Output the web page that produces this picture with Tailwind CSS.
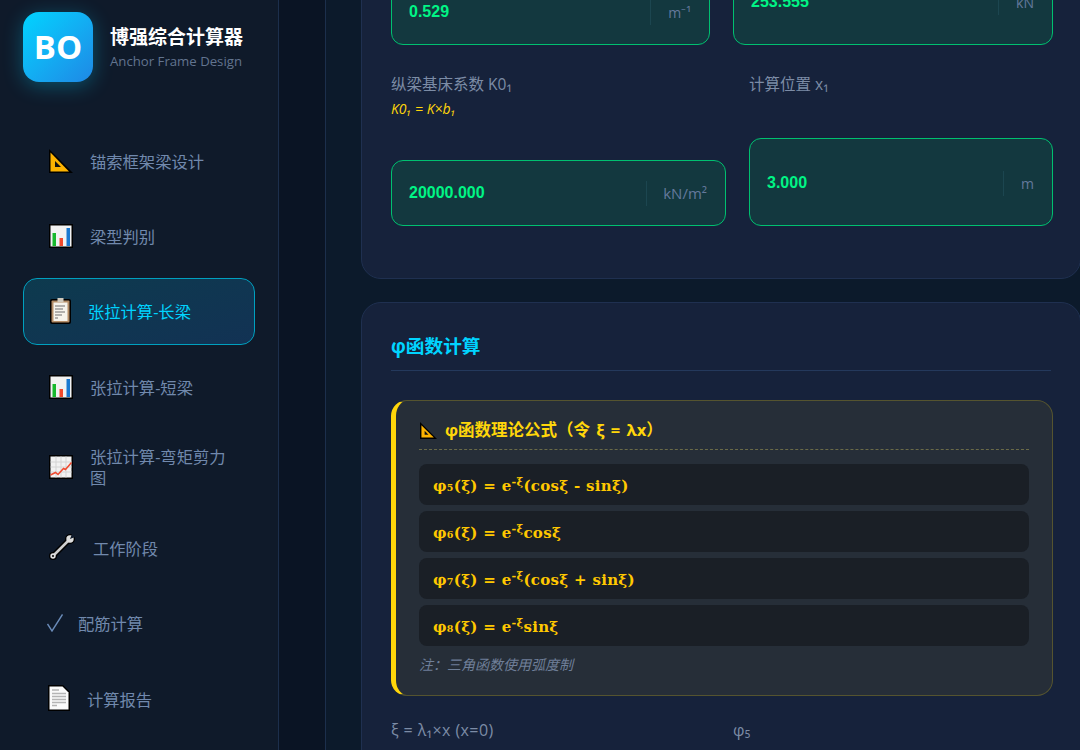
<!DOCTYPE html>
<html lang="zh-CN">
<head>
  <meta charset="UTF-8" />
  <title>博强综合计算器</title>
  <script src="https://cdn.jsdelivr.net/npm/@tailwindcss/browser@4"></script>
</head>
<body class="bg-[#0a1424] h-[750px] overflow-hidden font-['Open_Sans','Noto_Sans_CJK_SC',sans-serif]">
  <div class="flex h-[750px] overflow-hidden">

    <!-- Sidebar -->
    <aside class="w-[279px] shrink-0 h-full bg-[#0f1a2a] border-r border-[#1c2f4c] overflow-hidden">
      <div class="flex items-center gap-[17px] pl-[23px] pt-[12px]">
        <div class="w-[70px] h-[70px] rounded-2xl bg-gradient-to-br from-[#00d4ff] to-[#1e88e5] shadow-[0_4px_20px_rgba(0,212,255,0.3)] flex items-center justify-center text-white text-[33px] font-bold">BO</div>
        <div>
          <div class="text-white text-[19px] leading-[28px] font-bold">博强综合计算器</div>
          <div class="text-[#62748f] text-[13.2px] leading-[20px]">Anchor Frame Design</div>
        </div>
      </div>

      <nav class="mt-[45px] ml-[23px] w-[232px] flex flex-col gap-2 text-[16.3px] leading-[21px] text-[#7189ad]">
        <a class="flex items-center gap-4 px-[25px] py-[18px] h-[67.33px]">
          <svg class="w-[24px] h-[24px] mx-[1px] shrink-0" viewBox="0 0 24 24"><path d="M0 0v24h24z" fill="#000"/><path d="M1.500 3.500v19h18.500z" fill="#fdb300"/><path d="M6 12v6h6z" fill="#111"/></svg>
          <span class="pt-[4px]">锚索框架梁设计</span>
        </a>
        <a class="flex items-center gap-4 px-[25px] py-[18px] h-[67.33px]">
          <svg class="w-[24px] h-[24px] mx-[1px] shrink-0" viewBox="0 0 24 24"><rect width="24" height="24" fill="#000"/><rect x="1.500" y="1.500" width="21" height="21" fill="#f2f2f2"/><rect x="3.500" y="9" width="3.500" height="13" fill="#18b92d"/><rect x="10.500" y="14" width="3.500" height="8" fill="#f0492c"/><rect x="17.500" y="4" width="3.500" height="18" fill="#1a78d0"/></svg>
          <span class="pt-[4px]">梁型判别</span>
        </a>
        <a class="flex items-center gap-4 px-[24px] py-[18px] h-[67.33px] rounded-[14px] border border-[#00a0bf] bg-gradient-to-br from-[#0d3a4e] to-[#123254] text-[#00d4ff]">
          <svg class="w-[21px] h-[26px] ml-[2px] mr-[1px] shrink-0" viewBox="0 0 21 26"><rect y="1" width="21" height="25" rx="2" fill="#000"/><rect x="1.500" y="2.500" width="18" height="22" rx="1" fill="#b58e68"/><rect x="3.500" y="4.500" width="14" height="18.500" fill="#f6f3ec"/><rect x="7.500" y="0" width="6" height="4" fill="#cfc9bd"/><path d="M5 8h10M5 11h8M5 14h10M5 17h7M5 20h3" stroke="#6e6e6e" stroke-width="1.200"/></svg>
          <span class="pt-[2px]">张拉计算-长梁</span>
        </a>
        <a class="flex items-center gap-4 px-[25px] py-[18px] h-[67.33px]">
          <svg class="w-[24px] h-[24px] mx-[1px] shrink-0" viewBox="0 0 24 24"><rect width="24" height="24" fill="#000"/><rect x="1.500" y="1.500" width="21" height="21" fill="#f2f2f2"/><rect x="3.500" y="9" width="3.500" height="13" fill="#18b92d"/><rect x="10.500" y="14" width="3.500" height="8" fill="#f0492c"/><rect x="17.500" y="4" width="3.500" height="18" fill="#1a78d0"/></svg>
          <span class="pt-[4px]">张拉计算-短梁</span>
        </a>
        <a class="flex items-center gap-4 px-[25px] h-[77.5px]">
          <svg class="w-[24px] h-[24px] mx-[1px] shrink-0" viewBox="0 0 24 24"><rect width="24" height="24" fill="#000"/><rect x="1.500" y="1.500" width="21" height="21" fill="#f2f2f2"/><path d="M7 1.500v21M12 1.500v21M17 1.500v21M1.500 7h21M1.500 12h21M1.500 17h21" stroke="#d4d4d4"/><path d="M1.500 20l5-2.500 2.500 2 5.500-6 2 1 6-7" fill="none" stroke="#ef4a30" stroke-width="1.500"/></svg>
          <span class="pt-[2px]">张拉计算-弯矩剪力图</span>
        </a>
        <a class="flex items-center gap-4 px-[25px] py-[18px] h-[67.33px]">
          <svg class="w-[26px] h-[26px] ml-[1px] mr-[2px] shrink-0" viewBox="0 0 26 26"><path d="M4 22L21 5" stroke="#000" stroke-width="5.500"/><circle cx="21" cy="5" r="5" fill="#000"/><circle cx="4" cy="22" r="4" fill="#000"/><path d="M4 22L21 5" stroke="#cfcfcf" stroke-width="2.500"/><circle cx="21" cy="5" r="3.700" fill="#dedede"/><circle cx="4" cy="22" r="2.700" fill="#dedede"/><circle cx="4" cy="22" r="1" fill="#000"/><path d="M21 5l2-5h3v3z" fill="#0f1a2a"/></svg>
          <span class="pt-[4px]">工作阶段</span>
        </a>
        <a class="flex items-center gap-[15px] px-[25px] py-[18px] h-[67.33px]">
          <svg class="w-[16px] h-[18px] -ml-[1px] shrink-0" viewBox="0 0 16 18"><path d="M0.500 10l4.500 7L15.500 0.500" fill="none" stroke="#6a8bb8" stroke-width="1.400"/></svg>
          <span class="pt-[4px]">配筋计算</span>
        </a>
        <a class="flex items-center gap-4 px-[25px] py-[18px] h-[67.33px]">
          <svg class="w-[23px] h-[26px] shrink-0" viewBox="0 0 23 26"><path d="M0 0h15l7 7v19H0z" fill="#000"/><path d="M1.500 1.500h13l6 6v17h-19z" fill="#fafafa"/><path d="M4 5h7M4 8.500h14M4 11.500h14M4 14.500h14M4 17.500h14M4 20.500h5" stroke="#b5b5b5" stroke-width="1.300"/></svg>
          <span class="pt-[4px]">计算报告</span>
        </a>
      </nav>
    </aside>

    <div class="w-[47px] shrink-0 h-full bg-[#0a1424] border-r border-[#1c2f4c]"></div>

    <!-- Main content, scrolled down -->
    <main class="flex-1 min-w-0 h-full overflow-hidden bg-[#0c1a2b] pl-[35px]">
      <div class="w-[720px] flex flex-col gap-[23px] -mt-[60px]">

        <section class="h-[339px] shrink-0 rounded-[20px] border border-[#1f3050] bg-[#16223b] px-[29px] pt-[18px]">
          <div class="grid grid-cols-[319px_320px] gap-x-[23px] items-end h-[86px]">
            <div class="h-[66px] flex items-center rounded-xl border-[1.5px] border-[#00c070] bg-[#13383f] pl-[17px] pr-[18px]">
              <span class="flex-1 text-[#00f585] text-[16px] font-bold font-['Liberation_Sans']">0.529</span>
              <span class="h-[25px] border-l border-[#1c4650] pl-[17px] flex items-center text-[#64799c] text-[14px]">m⁻¹</span>
            </div>
            <div class="h-[86px] flex items-center rounded-xl border-[1.5px] border-[#00c070] bg-[#13383f] pl-[17px] pr-[18px]">
              <span class="flex-1 text-[#00f585] text-[16px] font-bold font-['Liberation_Sans']">253.555</span>
              <span class="h-[25px] border-l border-[#1c4650] pl-[17px] flex items-center text-[#64799c] text-[14px]">kN</span>
            </div>
          </div>

          <div class="grid grid-cols-[335px_304px] gap-x-[23px] mt-[29px] h-[152px]">
            <div class="flex flex-col">
              <label class="text-[#7c8ca6] text-[15.5px] leading-[21px]">纵梁基床系数 K0₁</label>
              <div class="text-[#ffd60a] text-[14px] leading-[18px] italic mt-[5px]">K0₁ = K×b₁</div>
              <div class="mt-auto h-[66px] flex items-center rounded-xl border-[1.5px] border-[#00c070] bg-[#13383f] pl-[17px] pr-[18px]">
                <span class="flex-1 text-[#00f585] text-[16px] font-bold font-['Liberation_Sans']">20000.000</span>
                <span class="h-[25px] border-l border-[#1c4650] pl-[16px] flex items-center text-[#64799c] text-[15px]">kN/m²</span>
              </div>
            </div>
            <div class="flex flex-col">
              <label class="text-[#7c8ca6] text-[15.5px] leading-[21px]">计算位置 x₁</label>
              <div class="mt-auto h-[88px] flex items-center rounded-xl border-[1.5px] border-[#00c070] bg-[#13383f] pl-[17px] pr-[18px] pt-[2px]">
                <span class="flex-1 text-[#00f585] text-[16px] font-bold font-['Liberation_Sans']">3.000</span>
                <span class="h-[25px] border-l border-[#1c4650] pl-[17px] flex items-center text-[#64799c] text-[14px]">m</span>
              </div>
            </div>
          </div>
        </section>

        <section class="h-[500px] shrink-0 rounded-[20px] border border-[#1f3050] bg-[#16223b] px-[29px] pt-[29px]">
          <h3 class="text-[#00d4ff] text-[18.7px] leading-[28px] font-bold pb-[10px] border-b border-[#24395c]">φ函数计算</h3>

          <div class="mt-[29px] w-[662px] h-[296px] rounded-2xl border border-[#55542f] border-l-[5px] border-l-[#ffd60a] bg-[#262e38] pl-[23px] pr-[23px] pt-[18px]">
            <div class="flex items-center gap-2 pb-[8px] border-b border-dashed border-[#6a6a48] text-[#ffd60a] text-[16.5px] leading-[22px] font-bold [word-spacing:2px]">
              <svg class="w-[17px] h-[17px] shrink-0 ml-[1px]" viewBox="0 0 24 24"><path d="M0 0v24h24z" fill="#000"/><path d="M2 4.500v17.500h17.500z" fill="#fdb300"/><path d="M6.500 12.500v5.500h5.500z" fill="#111"/></svg>
              <span>φ函数理论公式（令 ξ = λx）</span>
            </div>
            <div class="mt-[14px] flex flex-col gap-[6px] font-['DejaVu_Serif'] font-bold text-[#ffc800] text-[15px] tracking-[0.3px]">
              <div class="h-[41px] flex items-center px-[14px] pt-[4px] rounded-lg bg-[#1a1f26]"><span>φ₅(ξ) = e<sup>-ξ</sup>(cosξ - sinξ)</span></div>
              <div class="h-[41px] flex items-center px-[14px] pt-[4px] rounded-lg bg-[#1a1f26]"><span>φ₆(ξ) = e<sup>-ξ</sup>cosξ</span></div>
              <div class="h-[41px] flex items-center px-[14px] pt-[4px] rounded-lg bg-[#1a1f26]"><span>φ₇(ξ) = e<sup>-ξ</sup>(cosξ + sinξ)</span></div>
              <div class="h-[41px] flex items-center px-[14px] pt-[4px] rounded-lg bg-[#1a1f26]"><span>φ₈(ξ) = e<sup>-ξ</sup>sinξ</span></div>
            </div>
            <p class="mt-[9px] text-[#6f7f98] text-[14px] leading-[20px] italic">注：三角函数使用弧度制</p>
          </div>

          <div class="grid grid-cols-[319px_320px] gap-x-[23px] mt-[24px] text-[#7c8ca6] text-[16px] tracking-[0.4px] leading-[21px]">
            <label>ξ = λ₁×x (x=0)</label>
            <label>φ₅</label>
          </div>
        </section>
      </div>
    </main>
  </div>
</body>
</html>
